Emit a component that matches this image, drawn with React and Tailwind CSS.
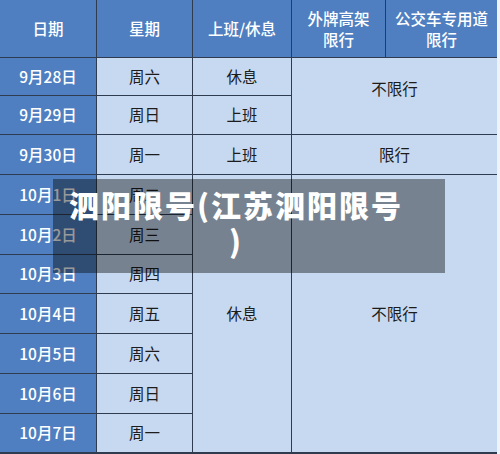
const rows = [
  { date: "9月28日", week: "周六" },
  { date: "9月29日", week: "周日" },
  { date: "9月30日", week: "周一" },
  { date: "10月1日", week: "周二" },
  { date: "10月2日", week: "周三" },
  { date: "10月3日", week: "周四" },
  { date: "10月4日", week: "周五" },
  { date: "10月5日", week: "周六" },
  { date: "10月6日", week: "周日" },
  { date: "10月7日", week: "周一" },
];

const font = { fontFamily: '"Noto Sans CJK SC", "Liberation Sans", sans-serif' };

const App = () => {
  return (
    <div className="relative w-[500px] h-[454px] bg-[#eef3fa] overflow-hidden" style={font}>
      {/* 表格 */}
      <div className="grid grid-cols-[96px_95px_98px_93px_111px] grid-rows-[57px_37px_38px_39px_39px_39px_38px_39px_39px_39px_38px] gap-px bg-[#2f3c50] border-b-2 border-[#2f3c50] w-[497px] text-[15.5px]">
        {/* 表头 */}
        <div className="bg-[#4f7fc0] text-white font-medium flex items-center justify-center">日期</div>
        <div className="bg-[#4f7fc0] text-white font-medium flex items-center justify-center">星期</div>
        <div className="bg-[#4f7fc0] text-white font-medium flex items-center justify-center">上班/休息</div>
        <div className="bg-[#4f7fc0] text-white font-medium flex flex-col items-center justify-center leading-[21px]">
          <span>外牌高架</span>
          <span>限行</span>
        </div>
        <div className="bg-[#4f7fc0] text-white font-medium flex flex-col items-center justify-center leading-[21px]">
          <span>公交车专用道</span>
          <span>限行</span>
        </div>

        {/* 日期列 */}
        {rows.map((r, i) => (
          <div
            key={r.date}
            className="bg-[#4f7fc0] text-white font-medium flex items-center justify-center col-start-1"
            style={{ gridRowStart: i + 2 }}
          >
            {r.date}
          </div>
        ))}

        {/* 星期列 */}
        {rows.map((r, i) => (
          <div
            key={"w" + i}
            className="bg-[#c6d9f0] text-[#1c1c1c] flex items-center justify-center col-start-2"
            style={{ gridRowStart: i + 2 }}
          >
            {r.week}
          </div>
        ))}

        {/* 上班/休息 */}
        <div className="bg-[#c6d9f0] text-[#1c1c1c] flex items-center justify-center col-start-3 row-start-2">休息</div>
        <div className="bg-[#c6d9f0] text-[#1c1c1c] flex items-center justify-center col-start-3 row-start-3">上班</div>
        <div className="bg-[#c6d9f0] text-[#1c1c1c] flex items-center justify-center col-start-3 row-start-4">上班</div>
        <div className="bg-[#c6d9f0] text-[#1c1c1c] flex items-center justify-center col-start-3 row-start-5 row-span-7">休息</div>

        {/* 限行 */}
        <div className="bg-[#c6d9f0] text-[#1c1c1c] flex items-start justify-center pt-[19px] col-start-4 col-span-2 row-start-2 row-span-2">不限行</div>
        <div className="bg-[#c6d9f0] text-[#1c1c1c] flex items-center justify-center col-start-4 col-span-2 row-start-4">限行</div>
        <div className="bg-[#c6d9f0] text-[#1c1c1c] flex items-center justify-center col-start-4 col-span-2 row-start-5 row-span-7">不限行</div>
      </div>

      {/* 标题遮罩 */}
      <div className="absolute left-[53px] top-[179px] w-[392px] h-[94px] bg-black/40 pl-[5px] pr-[31px] pt-[7px]">
        <p className="text-white font-black text-[30px] leading-[36px] tracking-[2px] text-center whitespace-nowrap">
          泗阳限号(江苏泗阳限号
          <br />)
        </p>
      </div>
    </div>
  );
};

export default App;
